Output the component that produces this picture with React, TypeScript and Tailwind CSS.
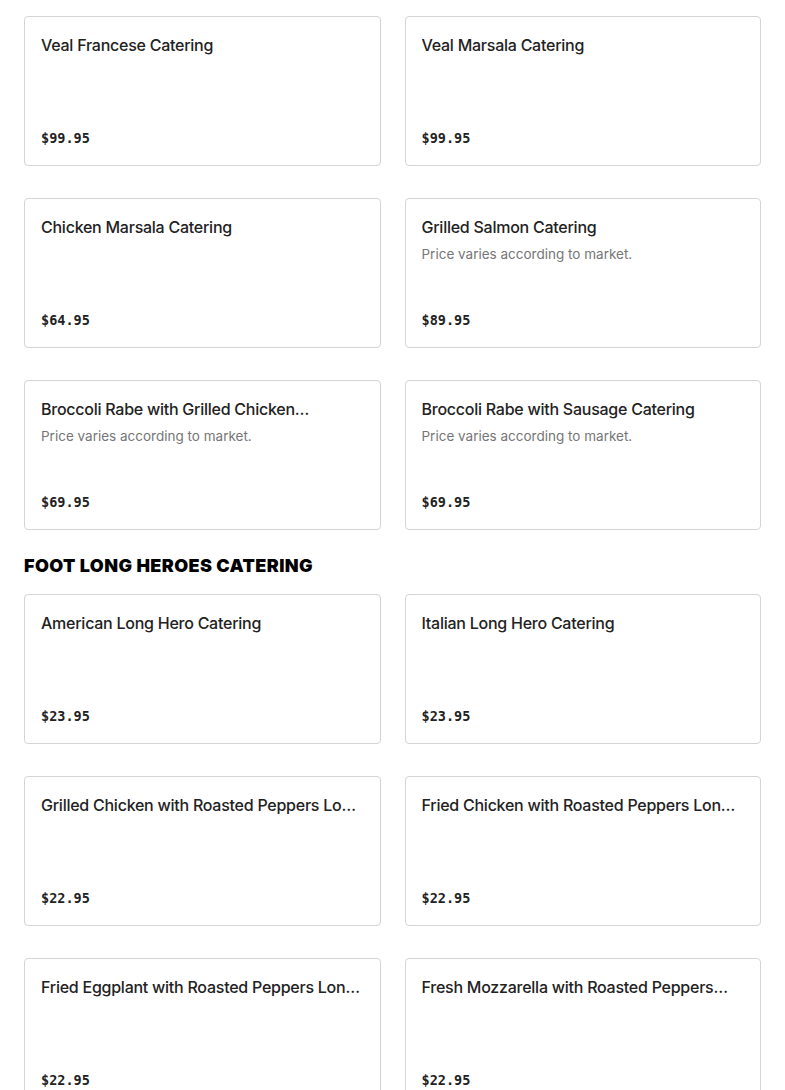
type Item = {
  name: string
  price: string
  note?: string
}

const entrees: Item[] = [
  { name: "Veal Francese Catering", price: "$99.95" },
  { name: "Veal Marsala Catering", price: "$99.95" },
  { name: "Chicken Marsala Catering", price: "$64.95" },
  { name: "Grilled Salmon Catering", price: "$89.95", note: "Price varies according to market." },
  { name: "Broccoli Rabe with Grilled Chicken…", price: "$69.95", note: "Price varies according to market." },
  { name: "Broccoli Rabe with Sausage Catering", price: "$69.95", note: "Price varies according to market." },
]

const heroes: Item[] = [
  { name: "American Long Hero Catering", price: "$23.95" },
  { name: "Italian Long Hero Catering", price: "$23.95" },
  { name: "Grilled Chicken with Roasted Peppers Long Hero Catering", price: "$22.95" },
  { name: "Fried Chicken with Roasted Peppers Long Hero Catering", price: "$22.95" },
  { name: "Fried Eggplant with Roasted Peppers Long Hero Catering", price: "$22.95" },
  { name: "Fresh Mozzarella with Roasted Peppers…", price: "$22.95" },
]

function MenuCard({ item }: { item: Item }) {
  return (
    <div className="flex h-[150px] min-w-0 flex-col rounded border border-[#d4d4d4] bg-white px-4 pt-4 pb-[17px]">
      <h3 className="truncate text-[16px] leading-6 font-medium tracking-[-0.25px] text-[#222]">{item.name}</h3>
      {item.note && (
        <p className="mt-[5px] text-[13.5px] leading-5 text-[#767676]">{item.note}</p>
      )}
      <p className="mt-auto font-['DejaVu_Sans_Mono',monospace] text-[13.5px] leading-5 font-bold text-[#222]">
        {item.price}
      </p>
    </div>
  )
}

function CardGrid({ items }: { items: Item[] }) {
  return (
    <div className="grid grid-cols-2 gap-x-6 gap-y-8">
      {items.map((item) => (
        <MenuCard key={item.name} item={item} />
      ))}
    </div>
  )
}

export default function App() {
  return (
    <div className="min-h-screen bg-white px-6 pt-4 font-['Inter',sans-serif]">
      <CardGrid items={entrees} />
      <h2 className="mt-6 mb-4 text-[18px] leading-6 font-black tracking-[0.4px] text-black">
        FOOT LONG HEROES CATERING
      </h2>
      <CardGrid items={heroes} />
    </div>
  )
}
